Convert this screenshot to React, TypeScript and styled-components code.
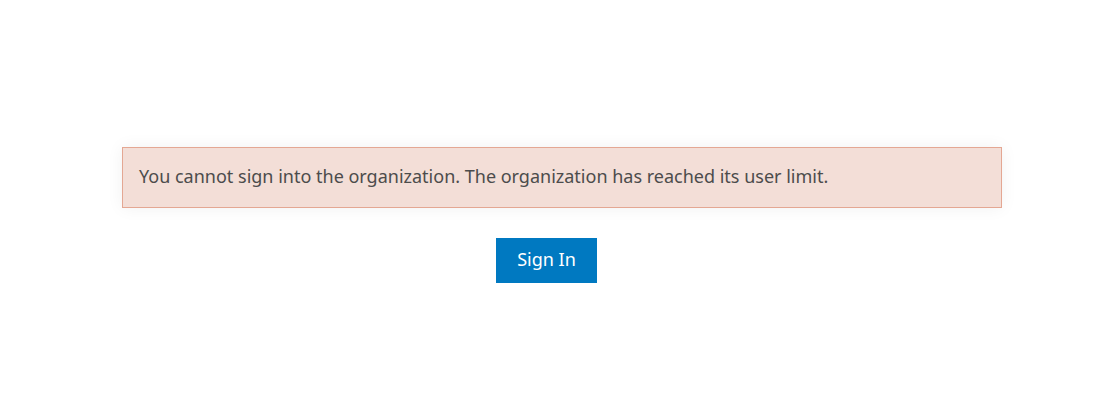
import React from "react";
import styled, { createGlobalStyle } from "styled-components";

const Global = createGlobalStyle`
  html, body { margin: 0; padding: 0; background: #ffffff; }
  body { font-family: "Noto Sans", "Lato", sans-serif; }
`;

const Page = styled.main`
  width: 1113px;
  height: 420px;
  box-sizing: border-box;
  padding: 147px 0 0 122px;
  display: flex;
  flex-direction: column;
`;

const Alert = styled.div`
  width: 880px;
  height: 61px;
  box-sizing: border-box;
  background: #f3ded7;
  border: 1px solid #e4a793;
  box-shadow: 0 0 16px rgba(0, 0, 0, 0.06);
  display: flex;
  align-items: center;
  padding: 0 16px 4px;
  color: #4c4c4c;
  font-size: 18px;
`;

const Actions = styled.div`
  display: flex;
  padding: 30px 0 0 374px;
`;

const Button = styled.button`
  width: 101px;
  height: 45px;
  border: none;
  background: #0079c1;
  color: #ffffff;
  font-family: "Noto Sans", "Lato", sans-serif;
  font-size: 18px;
  padding: 0 0 4px;
  cursor: pointer;
`;

export default function App() {
  return (
    <>
      <Global />
      <Page>
        <Alert>You cannot sign into the organization. The organization has reached its user limit.</Alert>
        <Actions>
          <Button>Sign In</Button>
        </Actions>
      </Page>
    </>
  );
}
